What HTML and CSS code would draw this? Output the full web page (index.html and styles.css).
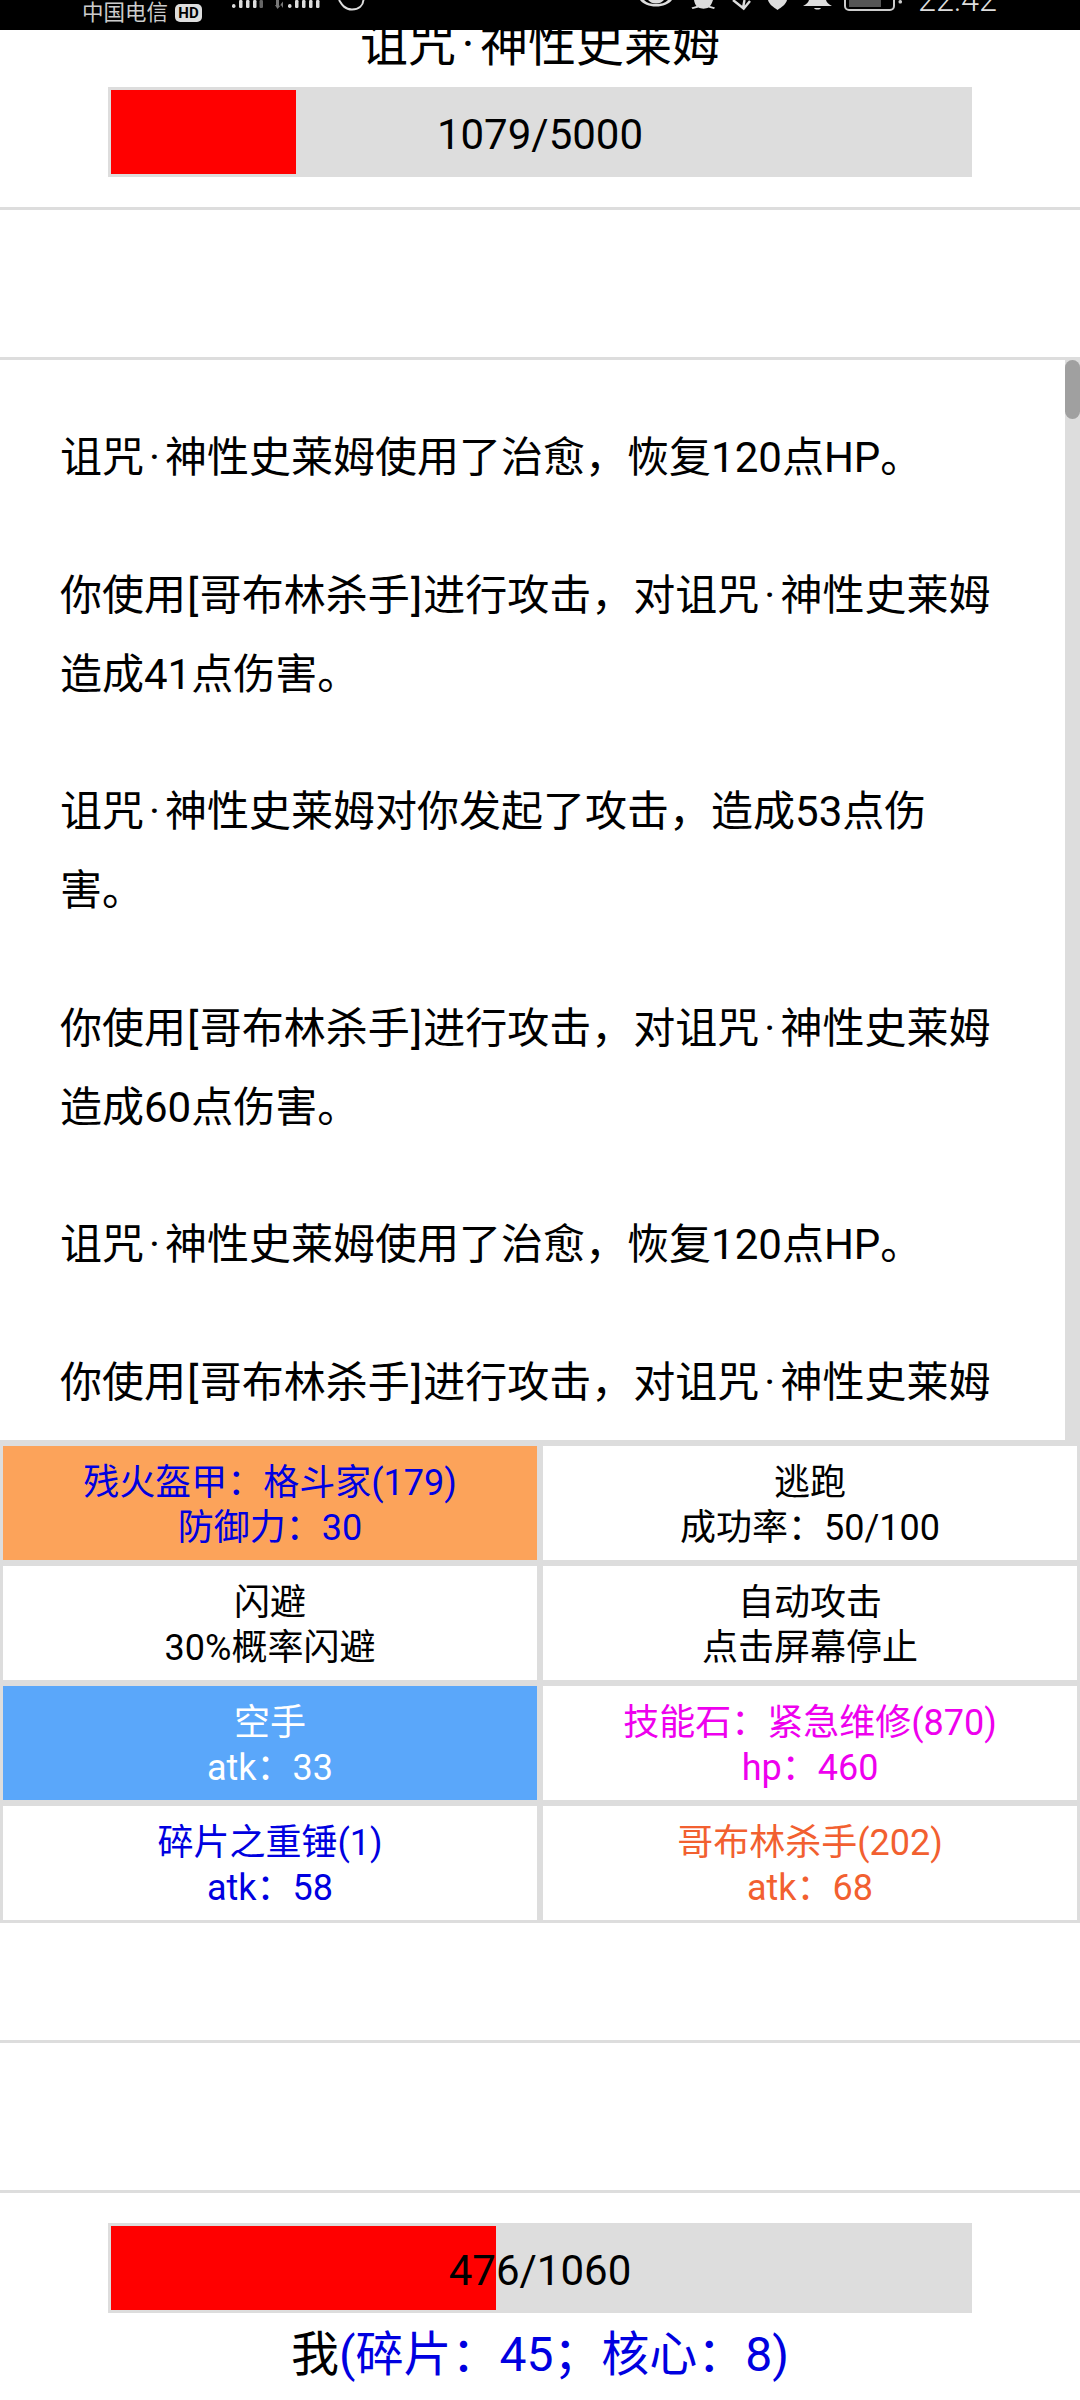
FILE: index.html
```html
<!DOCTYPE html>
<html lang="zh-CN">
<head>
<meta charset="utf-8">
<title>战斗</title>
<link rel="stylesheet" href="styles.css">
</head>
<body>
<div class="page">
  <header class="status">
    <span class="carrier">中国电信</span>
    <span class="hd">HD</span>
    <svg class="signal" width="31" height="10" viewBox="0 0 31 10"><g fill="#ddd"><rect x="0" y="4" width="3.5" height="4" rx="1.7"/><rect x="7" y="0" width="3.5" height="8" rx="1.2"/><rect x="14" y="0" width="3.5" height="8" rx="1.2"/><rect x="21" y="0" width="3.5" height="8" rx="1.2"/></g><rect x="27.5" y="0" width="3.5" height="8" rx="1.2" fill="#666"/></svg>
    <svg class="signal2" width="50" height="10" viewBox="0 0 50 10"><g fill="#777"><path d="M1 0h3v6l2-1-3.500 4L0 5l1 0z"/><path d="M8 8V1.500l-2.500 3z"/></g><g fill="#ddd"><rect x="13" y="4" width="3.500" height="4" rx="1.700"/><rect x="20" y="0" width="3.500" height="8" rx="1.200"/><rect x="27" y="0" width="3.500" height="8" rx="1.200"/><rect x="34" y="0" width="3.500" height="8" rx="1.200"/><rect x="41" y="0" width="3.500" height="8" rx="1.200"/></g></svg>
    <svg class="arc" width="27" height="11" viewBox="0 0 27 11"><path d="M1 0c3 5 6 9.500 13 9.500 7 0 11-4 11.500-9.500" fill="none" stroke="#ddd" stroke-width="2"/></svg>
    <div class="status-right">
      <svg class="ic-eye" width="32" height="7" viewBox="0 0 32 7"><path d="M0 0h4c3 3 7 4 12 4s9-1 12-4h4c-3 4-9 6.500-16 6.500S3 4 0 0z" fill="#ddd"/><path d="M8 0h16c-2 2.500-5 3.500-8 3.500S10 2.500 8 0z" fill="#ddd"/></svg>
      <svg class="ic-mute" width="27" height="10" viewBox="0 0 27 10"><path d="M4 0h19c-1 3-2 5-3 6l5 1.500-1 1.500-5.500-1.500C16 9 11 9 8.500 7.500L2.500 9l-1-1.500 5-1.500C5.500 5 4.500 3 4 0z" fill="#ddd"/></svg>
      <svg class="ic-bt" width="20" height="11" viewBox="0 0 20 11"><path d="M1 0l10 8 1.500-8M11 9.500L18 1" fill="none" stroke="#ddd" stroke-width="2.400"/></svg>
      <svg class="ic-pin" width="19" height="10" viewBox="0 0 19 10"><path d="M0 0h19c-1 4-5 7-9.500 10C5 7 1 4 0 0z" fill="#ddd"/></svg>
      <svg class="ic-bell" width="29" height="10" viewBox="0 0 29 10"><path d="M6 0h17c.5 2 2 4 6 6H0c4-2 5.500-4 6-6z" fill="#ddd"/><path d="M11 8h7c-1 2-6 2-7 0z" fill="#ddd"/></svg>
      <svg class="ic-bat" width="58" height="11" viewBox="0 0 58 11"><rect x="1" y="-8" width="49" height="18" rx="4" fill="none" stroke="#ccc" stroke-width="2"/><rect x="5" y="0" width="32" height="7" fill="#555"/><rect x="54.500" y="0" width="3.500" height="3.500" rx="1.500" fill="#ccc"/></svg>
      <span class="time">22:42</span>
    </div>
  </header>

  <section class="enemy">
    <h1 class="enemy-name">诅咒<span class="dot">·</span>神性史莱姆</h1>
    <div class="hp">
      <div class="hp-fill" style="width:21.58%"></div>
      <div class="hp-text">1079/5000</div>
    </div>
  </section>

  <div class="spacer"></div>

  <section class="log">
    <div class="log-text">
      <p>诅咒<span class="dot">·</span>神性史莱姆使用了治愈，恢复120点HP。</p>
      <p>你使用<span class="br">[</span>哥布林杀手<span class="br">]</span>进行攻击，对诅咒<span class="dot">·</span>神性史莱姆造成41点伤害。</p>
      <p>诅咒<span class="dot">·</span>神性史莱姆对你发起了攻击，造成53点伤害。</p>
      <p>你使用<span class="br">[</span>哥布林杀手<span class="br">]</span>进行攻击，对诅咒<span class="dot">·</span>神性史莱姆造成60点伤害。</p>
      <p>诅咒<span class="dot">·</span>神性史莱姆使用了治愈，恢复120点HP。</p>
      <p>你使用<span class="br">[</span>哥布林杀手<span class="br">]</span>进行攻击，对诅咒<span class="dot">·</span>神性史莱姆造成47点伤害。</p>
    </div>
    <div class="track"><div class="thumb"></div></div>
  </section>

  <section class="actions">
    <div class="cell bg-orange c-blue">残火盔甲：格斗家(179)<br>防御力：30</div>
    <div class="cell">逃跑<br>成功率：50/100</div>
    <div class="cell">闪避<br>30%概率闪避</div>
    <div class="cell">自动攻击<br>点击屏幕停止</div>
    <div class="cell bg-sky c-white">空手<br>atk：33</div>
    <div class="cell c-magenta">技能石：紧急维修(870)<br>hp：460</div>
    <div class="cell c-blue">碎片之重锤(1)<br>atk：58</div>
    <div class="cell c-red">哥布林杀手(202)<br>atk：68</div>
  </section>

  <div class="spacer spacer-a"></div>
  <div class="spacer spacer-b"></div>

  <section class="player">
    <div class="hp">
      <div class="hp-fill" style="width:44.9%"></div>
      <div class="hp-text">476/1060</div>
    </div>
    <div class="player-name">我<span class="c-blue">(碎片：45；核心：8)</span></div>
  </section>
</div>
</body>
</html>
```

FILE: styles.css
```css
* { box-sizing: border-box; }
html, body { margin: 0; padding: 0; background: #fff; }
body { font-family: Roboto, "Noto Sans CJK SC", sans-serif; color: #000; }
.page { width: 1080px; height: 2400px; overflow: hidden; display: flex; flex-direction: column; }

.status { height: 30px; flex: none; background: #000; color: #ddd; display: flex; align-items: flex-start; padding-left: 82px; overflow: hidden; }
.carrier { font-size: 21.5px; line-height: 26px; font-weight: 400; color: #ccc; }
.hd { margin: 4px 0 0 7px; width: 27px; height: 18px; background: #ddd; color: #000; border-radius: 5px; font-size: 15px; font-weight: 700; line-height: 18px; text-align: center; }
.signal { margin-left: 30px; }
.signal2 { margin-left: 12px; }
.arc { margin-left: 13px; }
.status-right { margin-left: 275px; display: flex; align-items: flex-start; }
.ic-mute { margin-left: 18px; }
.ic-bt { margin-left: 15px; }
.ic-pin { margin-left: 16px; }
.ic-bell { margin-left: 16px; }
.ic-bat { margin-left: 12px; }
.time { margin: -16px 0 0 16px; font-size: 32.5px; line-height: 32px; font-weight: 300; }

.dot { margin: 0 .12em; }
.br { margin: 0 .03em; }

.hp { width: 864px; height: 90px; margin: 0 auto; border: 3px solid #ddd; background: #ddd; display: grid; flex: none; }
.hp-fill, .hp-text { grid-area: 1 / 1; }
.hp-fill { background: #f00; height: 84px; }
.hp-text { font-size: 42px; line-height: 90px; text-align: center; }

.enemy { height: 180px; flex: none; border-bottom: 3px solid #ddd; }
.enemy-name { height: 57px; margin: 0; overflow: hidden; font-size: 48px; font-weight: 400; line-height: 30px; text-align: center; }

.spacer { height: 150px; flex: none; border-bottom: 3px solid #ddd; }

.log { height: 1083px; flex: none; display: flex; overflow: hidden; border-bottom: 3px solid #ddd; }
.log-text { flex: 1; padding: 0 60px; min-width: 0; }
.log-text p { margin: 59px 0 0; font-size: 42px; line-height: 78.75px; }
.track { width: 15px; flex: none; background: #ddd; }
.thumb { height: 59px; background: #a0a0a0; border-radius: 8px; }

.actions { display: grid; grid-template-columns: 540px 540px; grid-auto-rows: 120px; flex: none; }
.cell { border: 3px solid #ddd; background: #fff; font-size: 36px; line-height: 45px; text-align: center; padding-top: 15px; }
.bg-orange { background: #fca35a; }
.bg-sky { background: #5aa7fa; }
.c-blue { color: #0000e0; }
.c-white { color: #fff; }
.c-magenta { color: #ee00ee; }
.c-red { color: #f26030; }

.spacer-a { height: 120px; }
.spacer-b { height: 150px; }

.player { padding-top: 30px; flex: none; }
.player-name { font-size: 48px; line-height: 64px; text-align: center; margin-top: 10px; }
```
